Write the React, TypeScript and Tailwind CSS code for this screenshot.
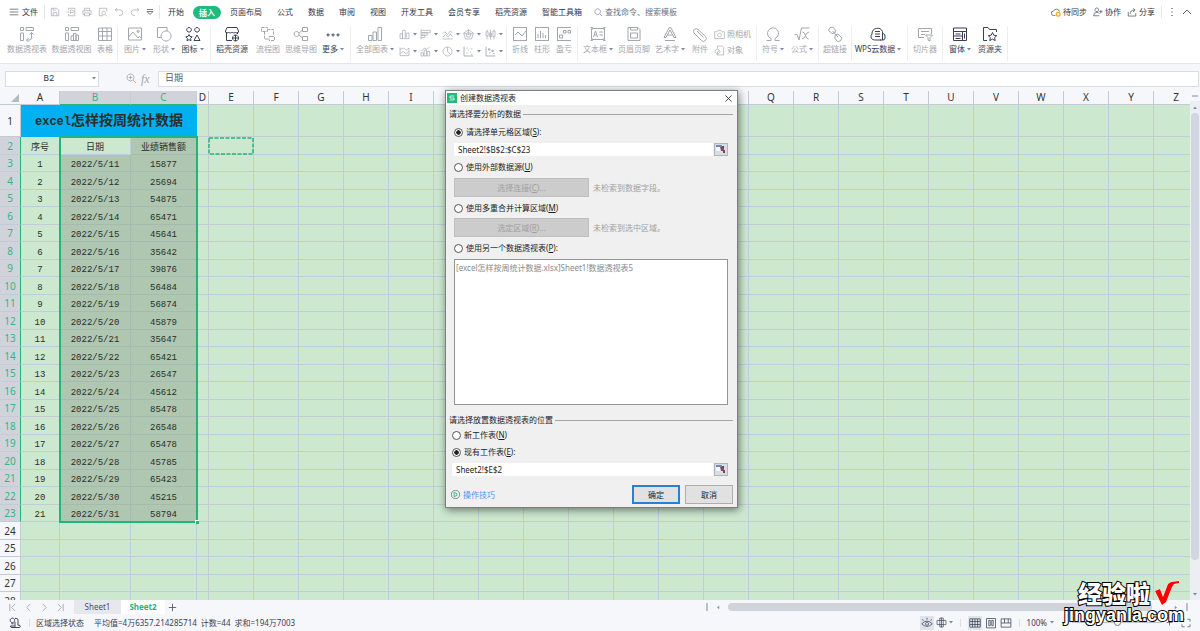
import type { ReactNode } from 'react'
import clsx from 'clsx'

/**
 * Line icons, all drawn on a 16 x 16 grid with the current text colour
 */
const icons: Record<string, ReactNode> = {
  menu: <path d="M1 3.500h14M1 8h14M1 12.500h14" />,
  save: <path d="M2 2h9l3 3v9H2zM5 14V9h6v5M5 2v3h4" />,
  export: <path d="M4 5V2h10v12H4v-3M7 11V5h3a2 2 0 0 1 0 4H7M1 8h4" />,
  print: <path d="M4 6V2h8v4M4 12H1.500V6h13v6H12M4 9.500h8V14H4z" />,
  preview: <path d="M14 7V2H2v12h6M9 6.500a3 3 0 1 0 .1 0zM11.500 12l3 3" />,
  undo: <path d="M5 1.500L2 4.500l3 3M2 4.500h7.500a4.500 4.500 0 0 1 0 9H8" />,
  redo: <path d="M11 1.500l3 3-3 3M14 4.500H6.500a4.500 4.500 0 0 0 0 9H8" />,
  more: <path d="M2 3h12M2 7h12l-6 6z" strokeWidth="1.500" />,
  search: <path d="M6.500 1.500a5 5 0 1 0 .1 0zM10.500 10.500l4 4" />,
  zoomIn: <path d="M6.500 1.500a5 5 0 1 0 .1 0zM10.500 10.500l4 4M4 6.500h5M6.500 4v5" strokeWidth="1.300" />,
  pivotTable: <path d="M1.500 1.500h3v3h-3zM7 1.500h7.500v3H7zM1.500 7h3v7.500h-3zM12.500 6.500v5.500a2 2 0 0 1-2 2H7.500M10.500 8.500l2-2 2 2M9.500 12l-2 2 2 2" />,
  pivotChart: <path d="M1.500 1.500h3v3h-3zM7 1.500h7.500v3H7zM1.500 7h3v7.500h-3zM7 14.500V10h2.500v4.500zM9.500 14.500v-7H12v7zM12 14.500V9h2.500v5.500z" />,
  table: <path d="M1.500 2h13v12.500h-13zM1.500 5.500h13M1.500 10h13M5.500 2v12.500M10 2v12.500" />,
  image: <path d="M1.500 2h13v12h-13zM1.500 11l4.500-5 5 6 1.500-1.500 2 2M11 4.500a1 1 0 1 0 .1 0z" />,
  shapes: <path d="M5.500 11.500h-4v-10H11V5M10 5a5 5 0 1 0 .1 0z" />,
  symbols: (
    <path d="M4 1.500a2.300 2.300 0 1 0 .1 0zM12 1.500a2.300 2.300 0 1 0 .1 0zM4 8.500l1 2 2.200.3-1.600 1.600.4 2.300-2-1-2 1 .4-2.300L.8 10.800 3 10.500zM12 9l3 5.500H9z" />
  ),
  store: (
    <path d="M2.500 6v8.500H8M13.500 6v2M3 1.500h10l1.500 3.500a1.500 1.500 0 0 1-3 1 2 2 0 0 1-3.500 0 2 2 0 0 1-3.500 0 1.500 1.500 0 0 1-3-1zM11.500 9a3 3 0 1 0 .1 0zM8.500 12h6M11.500 9v6" />
  ),
  flow: <path d="M1.500 1.500h6v4h-6zM7.500 3.500h6V9M4.500 5.500V13H8M11 10.500h3.500v4H9v-4z" strokeDasharray="3 1" />,
  mind: <path d="M3.500 5.500a2.500 2.500 0 1 0 .1 0zM6 7l3.500-3M6 9l3.500 3M9.500 1.500h5v4h-5zM9.500 10.500h5v4h-5z" />,
  dots: <path d="M3 8a1 1 0 1 0 .1 0zM8 8a1 1 0 1 0 .1 0zM13 8a1 1 0 1 0 .1 0z" />,
  allCharts: <path d="M1.500 9.500H5v5H1.500zM6 6h3.500v8.500H6zM11 1.500h3.500v13H11z" />,
  bars: <path d="M1.500 7H5v7H1.500zM5 2h4v12H5zM10.500 6h4v8h-4z" />,
  hbars: <path d="M1.500 1v14M1.500 2H15v3.500H1.500M1.500 5.500h9V9h-9M1.500 9H7v3.500H1.500" />,
  lines: <path d="M1 7l3-3 4 4 4-5 3 2M1 12l4-4 4 4 3-5 3 4M1 14.500h14" />,
  radar: <path d="M8 1l7 5-2.500 8.500h-9L1 6zM8 4.500l3.500 2.500-1.300 4.500H5.800L4.500 7zM8 1v7M1 6l7 2 7-2" />,
  stock: <path d="M3 1v3M3 10v5M1.500 4h3v6h-3zM8 1v14M6.500 6h3v5h-3zM13 1v2M13 11v4M11.500 3h3v8h-3z" />,
  area: <path d="M1.500 2v12h13V3l-4 3-4-3-5 2M2 11l4-3 4 3 4-3" />,
  combo: <path d="M1.500 10v4.500H5V10zM6 6v8.500h3.500V6zM10.500 8v6.500H14V8zM2 7l5-4 3 2 4-4" />,
  pie: <path d="M8 1.500a6.500 6.500 0 1 0 .1 0zM8 1.500V8l4 4" />,
  scatter: <path d="M1.500 1v13.500H15M5 10h1.500M7 6h1.500M10 9h1.500M12 4h1.500M12 12h1.500M5 3h1.500" strokeWidth="1.300" />,
  bubble: <path d="M1.500 1v13.500H15M5 4h2v2H5zM10 6h2v2h-2zM6 10h2M12 11h2" strokeWidth="1.300" />,
  sparkLine: <path d="M1 1.500h14M1 14.500h14M1.500 1.500v13M14.500 1.500v13M3 9l3-3 4 4 4-5" />,
  sparkBar: <path d="M1 1.500h14M1 14.500h14M1.500 1.500v13M14.500 1.500v13M4 12V8M6.500 12V5M9 12V7M11.500 12V9" />,
  winLoss: <path d="M1 1.500h14M1 14.500h14M1.500 1.500v13M3.500 9h3v3h-3zM7.500 4.500h2.500V7H7.500zM12 4.500h2.500V7H12z" />,
  textBox: <path d="M1.500 2.500h13v11h-13zM3.500 11l2-6 2 6M4.200 9h2.600M9.500 6H13M9.500 9H13M.5 1.500h2v2M15.500 1.500h-2v2M.5 14.500h2v-2M15.500 14.500h-2v-2" />,
  header: <path d="M2 1.500h10l2 2v11H2zM4.500 1.500V4h7V2M4.500 12V7h7v5zM2 14.500h12" />,
  wordArt: <path d="M2 11.500L7.200 1.500h1.600L14 11.500h-2L8 4 4 11.500zM5.500 9h5M3 14.500h10" />,
  clip: <path d="M2.500 3.500a2.500 2.500 0 0 1 3.500 0l7.500 7a2.700 2.700 0 0 1-4 4L2 7a3.400 3.400 0 0 1 0-3.500M5 5l6.500 6.500" />,
  camera: <path d="M1 4h3.500L6 2h4l1.500 2H15v10H1zM8 6a2.700 2.700 0 1 0 .1 0z" />,
  object: <path d="M5 5V1.500h7l2 2v11H6M5 6a3.500 3.500 0 1 0 .1 0zM5 15v-5l3-2" />,
  omega: <path d="M1.500 14.500H6v-2A5.500 5.500 0 1 1 10 12.500v2h4.500" />,
  root: <path d="M.5 8.500H3l2 5.500L7.500 2h8M8.500 6q2 0 3 3.500t3 3.500M15 6q-2 0-3.500 3.500T8 13" />,
  link: <path d="M3 1.500l3-.3 2.500 3L8 7 5 7.500 1.500 4.500zM8 9l3-1 4 4-1.500 3-3 .5L8 12.500zM5.500 5l5.500 6" />,
  cloudData: <path d="M11 14H4.500a3.500 3.500 0 0 1-2.500-6 5.500 5.500 0 0 1 10.500-2.500V14M12.500 7.500h.5a2.500 2.500 0 0 1 2 2.500v2a2 2 0 0 1-2 2h-3M5 5.500h5M5 8h5M5 10.500h5" />,
  slicer: <path d="M7 11.500H1.500v-9h13V8M4 5.500h8M4 8.500h4M8.500 9h7L13 11.500V15l-2-1v-2.500z" />,
  form: <path d="M1.500 2h13v12.500h-13zM1.500 5.500h13M1.500 10H10M10.500 5.500v9M3.500 8h5M3.500 12.500h5M12.500 7.500v5" />,
  starFolder: <path d="M5 14.500H1.500v-13H6l1.500 2h7V6M10.500 6.500l1.300 2.700 3 .4-2.200 2 .6 3-2.700-1.500-2.700 1.500.6-3-2.200-2 3-.4z" />,
  person: <path d="M6 1.500a3 3 0 1 0 .1 0zM1 14q0-5.500 5-5.500 3 0 4 2M1 14h9M12.500 5v5M10 7.500h5" />,
  share: <path d="M2 8v6.500h12V10M5 11q0-6 7-6M9.500 2l3.500 3-3.500 3" />,
  eye: <path d="M1 9q7-7 14 0-7 7-14 0zM8 7a2 2 0 1 0 .1 0zM3 5L2 3M8 3.500V1M13 5l1-2" />,
  move: <path d="M5.500 1.500h5v13h-5zM1.500 5h13v6h-13zM8 1v14" />,
  normalView: <path d="M1 2.500h14v11H1zM1 6h14M1 10h14M4.500 2.500v11M8 2.500v11M11.500 2.500v11" />,
  pageView: <path d="M2 2h12v12.500H2zM5 4.500h2v7H5zM9 4.500h2v7H9z" />,
  breakView: <path d="M1.500 2.500h13v11h-13zM6 2.500V8h5V2.500M1.500 8H6M11 8h3.500" />,
  macro: <path d="M8 6.500V14h5.500a1.500 1.500 0 0 0 0-3H12V4a2 2 0 0 0-2-2H8M2 12h5.500M2 12a2 2 0 0 0 2 2h4M4.500 1.500a3 3 0 1 0 .1 0zM3 9h3" strokeWidth="1.300" />,
  full: <path d="M10 2h4.500v4M6 14H1.500v-4M2 6V2h4M14.500 10v4H10" />,
  plus: <path d="M8 1.500v13M1.500 8h13" strokeWidth="1.500" />,
}

function Icon({ name, className = 'size-4' }: { name: string; className?: string }) {
  return (
    <svg viewBox="0 0 16 16" fill="none" stroke="currentColor" className={clsx('shrink-0', className)} aria-hidden="true">
      {icons[name]}
    </svg>
  )
}

function Caret({ className = 'text-[#7a86a0]' }: { className?: string }) {
  return (
    <svg viewBox="0 0 4 3" className={clsx('h-[3px] w-1 shrink-0', className)} aria-hidden="true">
      <path d="M0 0h4L2 2.500z" fill="currentColor" />
    </svg>
  )
}

interface ToolProps {
  icon: string
  label: string
  width: string
  /** Available for the current selection */
  active?: boolean
  menu?: boolean
}

function Tool({ icon, label, width, active, menu }: ToolProps) {
  return (
    <button className={clsx('flex shrink-0 flex-col items-center gap-px', width, active ? 'text-[#3a4156]' : 'text-[#a3a6ad]')}>
      <Icon name={icon} />
      <span className="flex items-center gap-0.5 whitespace-nowrap leading-3">
        {label}
        {menu && <Caret />}
      </span>
    </button>
  )
}

function Group({ children, className }: { children: ReactNode; className?: string }) {
  return <div className={clsx('flex shrink-0 border-r border-[#eceef1]', className)}>{children}</div>
}

const quickTools = ['save', 'export', 'print', 'preview', 'undo', 'redo']
const menuTabs = ['开始', '插入', '页面布局', '公式', '数据', '审阅', '视图', '开发工具', '会员专享', '稻壳资源', '智能工具箱']

function MenuBar() {
  return (
    <header className="flex h-6 items-center pr-2 pl-[9px] text-[#303648]">
      <button className="flex items-center gap-[3px]">
        <Icon name="menu" className="size-[10px]" />
        文件
      </button>
      <div className="ml-[6px] flex items-center gap-[6px] border-x border-[#e4e6ea] px-[5px] py-0.5 text-[#9a9da6]">
        {quickTools.map((name) => (
          <button key={name} aria-label={name}>
            <Icon name={name} className="size-[10px]" />
          </button>
        ))}
        <button aria-label="more" className="text-[#4a5164]">
          <Icon name="more" className="size-2" />
        </button>
      </div>
      <nav className="ml-2 flex items-center gap-[15px] whitespace-nowrap">
        {menuTabs.map((tab) => (
          <button
            key={tab}
            className={clsx(tab === '插入' && '-mx-[6px] rounded-full bg-[#1fbb7d] px-[6px] leading-[13px] font-bold text-white')}
          >
            {tab}
          </button>
        ))}
      </nav>
      <label className="ml-3 flex items-center gap-0.5 text-[#66718c]">
        <Icon name="search" className="size-[9px]" />
        <input className="w-24 bg-transparent outline-none placeholder:text-[#66718c]" placeholder="查找命令、搜索模板" />
      </label>
      <div className="ml-auto flex items-center gap-[6px] whitespace-nowrap">
        <button className="flex items-center gap-0.5">
          <svg viewBox="0 0 16 16" fill="none" className="size-[10px]" aria-hidden="true">
            <path d="M7 13.500H4A3.500 3.500 0 0 1 4 6.500a5 5 0 0 1 9.500 1" stroke="currentColor" />
            <circle cx="11.500" cy="11.500" r="3" stroke="#f5a623" strokeWidth="2" />
          </svg>
          待同步
        </button>
        <button className="flex items-center gap-0.5">
          <Icon name="person" className="size-[10px]" />
          协作
        </button>
        <button className="flex items-center gap-0.5">
          <Icon name="share" className="size-[10px]" />
          分享
        </button>
        <span className="h-3 border-r border-[#e4e6ea]" />
        <button aria-label="options" className="w-2">
          <svg viewBox="0 0 8 10" className="w-2" fill="currentColor" aria-hidden="true">
            <path d="M3.500 1h1v1h-1zM3.500 4.500h1v1h-1zM3.500 8h1v1h-1z" />
          </svg>
        </button>
        <button aria-label="collapse">
          <svg viewBox="0 0 10 6" className="w-[10px]" fill="none" stroke="currentColor" aria-hidden="true">
            <path d="M1 5l4-4 4 4" strokeWidth=".8" />
          </svg>
        </button>
      </div>
    </header>
  )
}

const chartKinds = ['bars', 'hbars', 'lines', 'radar', 'stock', 'area', 'combo', 'pie', 'scatter', 'bubble']

function Ribbon() {
  return (
    <div className="flex h-10 border-b border-[#e2e5e9] pt-0.5 pb-0.5 pl-1 shadow-xs">
      <Group>
        <Tool icon="pivotTable" label="数据透视表" width="w-[46px]" />
        <Tool icon="pivotChart" label="数据透视图" width="w-[43px]" />
        <Tool icon="table" label="表格" width="w-6" />
      </Group>
      <Group className="pr-[3px] pl-0.5">
        <Tool icon="image" label="图片" width="w-[30px]" menu />
        <Tool icon="shapes" label="形状" width="w-[28px]" menu />
        <Tool icon="symbols" label="图标" width="w-[29px]" active menu />
      </Group>
      <Group className="pr-[3px]">
        <Tool icon="store" label="稻壳资源" width="w-[42px]" active />
        <Tool icon="flow" label="流程图" width="w-[30px]" />
        <Tool icon="mind" label="思维导图" width="w-9" />
        <Tool icon="dots" label="更多" width="w-7" active menu />
      </Group>
      <Group>
        <Tool icon="allCharts" label="全部图表" width="w-12" menu />
        <div className="grid w-[107px] grid-cols-5 text-[#a3a6ad]">
          {chartKinds.map((name) => (
            <button key={name} aria-label={name} className="flex h-4 items-center gap-[3px]">
              <Icon name={name} className="size-[11px]" />
              <Caret />
            </button>
          ))}
        </div>
      </Group>
      <Group className="px-0.5">
        <Tool icon="sparkLine" label="折线" width="w-[22px]" />
        <Tool icon="sparkBar" label="柱形" width="w-[22px]" />
        <Tool icon="winLoss" label="盈亏" width="w-[22px]" />
      </Group>
      <Group>
        <Tool icon="textBox" label="文本框" width="w-10" menu />
        <Tool icon="header" label="页眉页脚" width="w-8" />
        <Tool icon="wordArt" label="艺术字" width="w-10" menu />
        <Tool icon="clip" label="附件" width="w-5" />
        <div className="flex w-[46px] flex-col pl-1 whitespace-nowrap text-[#a3a6ad]">
          <button className="flex h-4 items-center gap-0.5">
            <Icon name="camera" className="size-[11px]" />
            照相机
          </button>
          <button className="flex h-4 items-center gap-0.5">
            <Icon name="object" className="size-[11px]" />
            对象
          </button>
        </div>
      </Group>
      <Group className="pr-[3px]">
        <Tool icon="omega" label="符号" width="w-8" menu />
        <Tool icon="root" label="公式" width="w-[26px]" menu />
      </Group>
      <Group>
        <Tool icon="link" label="超链接" width="w-8" />
      </Group>
      <Group className="pr-[3px]">
        <Tool icon="cloudData" label="WPS云数据" width="w-[52px]" active menu />
      </Group>
      <Group>
        <Tool icon="slicer" label="切片器" width="w-[34px]" />
      </Group>
      <Group className="px-0.5">
        <Tool icon="form" label="窗体" width="w-[30px]" active menu />
        <Tool icon="starFolder" label="资源夹" width="w-[30px]" active />
      </Group>
    </div>
  )
}

function FormulaBar() {
  return (
    <div className="flex h-[27px] items-center bg-[#f5f7fa] pt-0.5 pl-[5px]">
      <div className="flex h-4 w-[94px] items-center border border-[#d9dce2] bg-white pr-0.5">
        <input
          aria-label="Name box"
          defaultValue="B2"
          className="w-full min-w-0 bg-transparent text-center font-['Liberation_Mono',monospace] text-[9px] text-[#303648] outline-none"
        />
        <Caret />
      </div>
      <div className="ml-[27px] flex w-8 items-center gap-1 text-[#a3a6ad]">
        <Icon name="zoomIn" className="size-[11px]" />
        <span className="font-['Liberation_Serif',serif] text-[12px] italic">fx</span>
      </div>
      <input
        aria-label="Formula"
        defaultValue="日期"
        className="mr-px h-4 flex-1 border border-[#d9dce2] bg-white px-[6px] pb-0.5 text-[9px] text-[#555b6b] outline-none"
      />
    </div>
  )
}

const columns = 'ABCDEFGHIJKLMNOPQRSTUVWXYZ'.split('')
const columnWidths: Record<string, string> = {
  A: 'w-[39px]',
  B: 'w-[71px]',
  C: 'w-[66px]',
  D: 'w-3',
}
const sales = [
  15877, 25694, 54875, 65471, 45641, 35642, 39876, 56484, 56874, 45879, 35647,
  65421, 26547, 45612, 85478, 26548, 65478, 45785, 65423, 45215, 58794,
]

/** Text of a cell: row 2 holds the headings, rows 3 to 23 the data */
function cellText(column: string, row: number) {
  if (row === 2) return { A: '序号', B: '日期', C: '业绩销售额' }[column]
  if (row < 3 || row > 23) return ''
  return { A: `${row - 2}`, B: `2022/5/${row + 8}`, C: `${sales[row - 3]}` }[column]
}

function Sheet() {
  const rows = Array.from({ length: 27 }, (_, i) => i + 2)
  const line = 'border-r border-b border-[#c3cbd9]'

  return (
    <table className="w-[1199px] table-fixed border-separate border-spacing-0 text-center text-[#2a2f2a]">
      <colgroup>
        <col className="w-[21px]" />
        {columns.map((column) => (
          <col key={column} className={columnWidths[column] ?? 'w-[45px]'} />
        ))}
      </colgroup>
      <thead className="text-[10px] leading-[13px] text-[#333]">
        <tr className="h-[14px] bg-[#f5f7fa]">
          <th className="border-b border-[#c3cbd9] p-0 pr-0.5">
            <svg viewBox="0 0 8 8" className="ml-auto size-2" aria-hidden="true">
              <path d="M8 0v8H0z" fill="#b5b9c0" />
            </svg>
          </th>
          {columns.map((column) => (
            <th
              key={column}
              className={clsx(
                'p-0 font-normal',
                column === 'B' || column === 'C'
                  ? 'border-r border-b border-r-[#c9ccd5] border-b-[#22b57b] bg-[#d0d3da] text-[#35b586]'
                  : line,
              )}
            >
              {column}
            </th>
          ))}
        </tr>
      </thead>
      <tbody className="font-['Liberation_Mono','Noto_Sans_CJK_SC',monospace] text-[9px] leading-[14px]">
        <tr className="h-8">
          <th className="border-r border-b border-[#c3cbd9] bg-[#f5f7fa] p-0 font-['Noto_Sans',sans-serif] text-[10px] font-normal text-[#333]">1</th>
          <td colSpan={3} className="bg-[#00b0f0] p-0 text-[14px] font-bold">
            <span className="text-[12px]">excel</span>怎样按周统计数据
          </td>
          {columns.slice(3).map((column) => (
            <td key={column} className={clsx('bg-[#cce8cf] p-0', line)} />
          ))}
        </tr>
        {rows.map((row) => (
          <tr key={row} className={row % 2 ? 'h-[17px]' : 'h-[18px]'}>
            <th
              className={clsx(
                "border-r border-b border-b-[#c3cbd9] p-0 font-['Noto_Sans',sans-serif] text-[10px] font-normal",
                row < 24 ? 'border-r-[#22b57b] bg-[#d0d3da] text-[#35b586]' : 'border-r-[#c3cbd9] bg-[#f5f7fa] text-[#333]',
              )}
            >
              {row}
            </th>
            {columns.map((column) => (
              <td
                key={column}
                className={clsx(
                  'p-0 pt-1 leading-3 whitespace-nowrap',
                  row < 24 && row + column !== '2B' && (column === 'B' || column === 'C')
                    ? 'border-r border-b border-[#a7b9b0] bg-[#afc6b1]'
                    : `bg-[#cce8cf] ${line}`,
                )}
              >
                {cellText(column, row)}
              </td>
            ))}
          </tr>
        ))}
      </tbody>
    </table>
  )
}

function VerticalScroll() {
  return (
    <div className="flex w-[10px] shrink-0 flex-col items-center bg-[#eceef3] text-[#8690a8]">
      <div className="flex h-[10px] w-full items-center justify-center bg-[#f5f7fa]">
        <span className="h-0.5 w-[6px] bg-[#b9c0cf]" />
      </div>
      <div className="flex h-3 items-center">
        <Caret className="rotate-180" />
      </div>
      <div className="w-2 flex-1 rounded-full bg-[#d2d6e0]" />
      <div className="flex h-10 items-end pb-1">
        <Caret />
      </div>
    </div>
  )
}

interface RadioProps {
  group: string
  label: string
  hotkey: string
  suffix?: string
  checked?: boolean
}

function Radio({ group, label, hotkey, suffix = '', checked }: RadioProps) {
  return (
    <label className="flex h-3 items-center gap-[3px]">
      <input
        type="radio"
        name={group}
        defaultChecked={checked}
        className="size-[9px] appearance-none rounded-full border border-[#555] bg-white checked:bg-[radial-gradient(circle,#222_40%,#fff_50%)]"
      />
      <span>
        {label}(<u>{hotkey}</u>){suffix}
      </span>
    </label>
  )
}

function Legend({ children }: { children: ReactNode }) {
  return (
    <div className="flex items-center gap-0.5 leading-3">
      {children}
      <span className="flex-1 border-t border-[#a5a5a5]" />
    </div>
  )
}

function RangeInput({ label, value }: { label: string; value: string }) {
  return (
    <div className="flex h-[13px] gap-px">
      <input aria-label={label} defaultValue={value} className="min-w-0 flex-1 bg-white px-1 outline-none" />
      <button aria-label="Pick range" className="flex w-[14px] items-center justify-center border border-[#b0b4bb] bg-[#d9dde5]">
        <svg viewBox="0 0 10 9" className="w-[10px]" aria-hidden="true">
          <path d="M0 0h7v6H0z" fill="#f4f7ff" />
          <path d="M0 0h6v2H0z" fill="#6f86c4" />
          <path d="M4 2h3v1h1v2h1v3H7V6H5z" fill="#8c4a50" />
          <path d="M6 1h2v2H6zM8 6h1v2H8z" fill="#3d4f8f" />
        </svg>
      </button>
    </div>
  )
}

function DisabledAction({ label, hotkey, note }: { label: string; hotkey: string; note: string }) {
  return (
    <div className="flex items-center gap-1 text-[#a0a0a0]">
      <button disabled className="h-[19px] w-[135px] border border-[#c0c0c0] bg-[#cccccc]">
        {label}(<u>{hotkey}</u>)...
      </button>
      {note}
    </div>
  )
}

/**
 * Create pivot table dialog
 */
function PivotDialog() {
  return (
    <div
      role="dialog"
      aria-label="创建数据透视表"
      className="absolute top-[90px] left-[445px] w-[293px] border border-[#7b7f80] bg-[#f0f0f0] text-[#1d1d1d] shadow-[1px_2px_8px_rgba(0,0,0,0.5)]"
    >
      <div className="flex h-[14px] items-center gap-[3px] bg-white pr-[5px] pl-px">
        <svg viewBox="0 0 20 20" className="size-[10px]" aria-hidden="true">
          <rect width="20" height="20" fill="#1fbb7d" />
          <path d="M15 6H6v4h8v4H5" fill="none" stroke="#fff" strokeWidth="1.500" />
        </svg>
        创建数据透视表
        <button aria-label="Close" className="ml-auto">
          <svg viewBox="0 0 8 8" className="size-[7px]" stroke="#333" fill="none" aria-hidden="true">
            <path d="M.5.5l7 7M7.500.5l-7 7" />
          </svg>
        </button>
      </div>

      <div className="pt-[3px] pr-1 pl-[3px]">
        <Legend>请选择要分析的数据</Legend>
        <div className="flex flex-col pt-[6px] pr-[5px] pl-[5px]">
          <Radio group="source" label="请选择单元格区域" hotkey="S" suffix=":" checked />
          <div className="py-[5px]">
            <RangeInput label="数据区域" value="Sheet2!$B$2:$C$23" />
          </div>
          <Radio group="source" label="使用外部数据源" hotkey="U" />
          <div className="py-[5px]">
            <DisabledAction label="选择连接" hotkey="C" note="未检索到数据字段。" />
          </div>
          <Radio group="source" label="使用多重合并计算区域" hotkey="M" />
          <div className="pt-1 pb-[5px]">
            <DisabledAction label="选定区域" hotkey="R" note="未检索到选中区域。" />
          </div>
          <Radio group="source" label="使用另一个数据透视表" hotkey="P" suffix=":" />
          <select
            size={8}
            aria-label="数据透视表"
            className="mt-[5px] h-[146px] appearance-none overflow-hidden border border-[#8f959c] bg-white px-px py-0.5 text-[#8a8a8a] outline-none"
          >
            <option>[excel怎样按周统计数据.xlsx]Sheet1!数据透视表5</option>
          </select>
        </div>
      </div>

      <div className="pt-[9px] pr-1 pl-[3px]">
        <Legend>请选择放置数据透视表的位置</Legend>
        <div className="flex flex-col gap-[5px] pt-[3px] pr-[5px] pl-[3px]">
          <Radio group="target" label="新工作表" hotkey="N" />
          <Radio group="target" label="现有工作表" hotkey="E" suffix=":" checked />
          <RangeInput label="放置位置" value="Sheet2!$E$2" />
        </div>
      </div>

      <div className="flex items-center gap-[5px] pt-[9px] pr-1 pb-[3px] pl-[5px]">
        <a href="#tips" className="mr-auto flex items-center gap-[3px] text-[#4a90f0]">
          <svg viewBox="0 0 10 10" className="size-[9px]" fill="none" aria-hidden="true">
            <circle cx="5" cy="5" r="4.500" stroke="#5f6b66" strokeWidth=".8" />
            <path d="M3.500 2.500v5l3-1.500v-2z" stroke="#1fbb7d" />
          </svg>
          操作技巧
        </a>
        <button className="h-[19px] w-12 border-2 border-[#2b7fd0] bg-[#e1e1e1]">确定</button>
        <button className="h-[19px] w-12 border border-[#adadad] bg-[#e1e1e1]">取消</button>
      </div>
    </div>
  )
}

function TabBar() {
  return (
    <div className="flex h-[14px] items-center bg-[#f5f7fa] text-[#4a5164]">
      <div className="flex w-[74px] items-center gap-[7px] pl-2 text-[#a3a9b8]">
        {['M2 1v8M8 1L4 5l4 4', 'M7 1L3 5l4 4', 'M3 1l4 4-4 4', 'M2 1l4 4-4 4M8 1v8'].map((d) => (
          <button key={d} aria-label="Move between sheets">
            <svg viewBox="0 0 10 10" className="size-[9px]" fill="none" stroke="currentColor" aria-hidden="true">
              <path d={d} />
            </svg>
          </button>
        ))}
      </div>
      <button className="h-full w-[47px] bg-[#e6e8ee]">Sheet1</button>
      <button className="h-full w-11 bg-white font-bold text-[#1fb57a]">Sheet2</button>
      <button aria-label="Add sheet" className="ml-[3px]">
        <Icon name="plus" className="size-[9px]" />
      </button>
      <div className="ml-auto flex w-[494px] items-center gap-2 pr-3">
        <span className="h-2 w-0.5 bg-[#b9c0cf]" />
        <Caret className="rotate-90 text-[#8690a8]" />
        <div className="h-2 w-[424px] rounded-full bg-[#d0d3da]" />
        <Caret className="ml-auto -rotate-90 text-[#8690a8]" />
        <span className="h-2 w-0.5 bg-[#b9c0cf]" />
      </div>
    </div>
  )
}

function StatusBar() {
  return (
    <footer className="flex h-[17px] items-center bg-[#f5f7fa] pr-[9px] pl-[9px] whitespace-nowrap text-[#3a4156]">
      <Icon name="macro" className="size-3" />
      <span className="ml-2 h-2 border-r border-[#dcdfe5]" />
      <span className="ml-[6px]">区域选择状态</span>
      <span className="ml-[10px]">平均值=4万6357.214285714</span>
      <span className="ml-1">计数=44</span>
      <span className="ml-1">求和=194万7003</span>
      <div className="ml-auto flex items-center">
        <button aria-label="Eye protection" className="flex size-[14px] items-center justify-center bg-[#dfe3ea]">
          <Icon name="eye" className="size-3" />
        </button>
        <button aria-label="Reading mode" className="ml-0.5 flex items-center gap-0.5">
          <Icon name="move" className="size-[11px]" />
          <Caret />
        </button>
        <span className="mx-[7px] h-2 border-r border-[#dcdfe5]" />
        <button aria-label="Normal view" className="flex size-[14px] items-center justify-center bg-[#dfe3ea]">
          <Icon name="normalView" className="size-3" />
        </button>
        <button aria-label="Page view" className="ml-[3px]">
          <Icon name="pageView" className="size-3" />
        </button>
        <button aria-label="Page breaks" className="ml-[3px]">
          <Icon name="breakView" className="size-3" />
        </button>
        <span className="mx-[7px] h-2 border-r border-[#dcdfe5]" />
        <button className="flex items-center gap-[3px]">
          100%
          <Caret />
        </button>
        <span className="ml-2 h-px w-[6px] bg-[#4a5164]" />
        <input
          type="range"
          aria-label="Zoom"
          className="mx-1 h-px w-[90px] appearance-none bg-[#b9c0cf] [&::-webkit-slider-thumb]:size-[7px] [&::-webkit-slider-thumb]:appearance-none [&::-webkit-slider-thumb]:rounded-full [&::-webkit-slider-thumb]:border [&::-webkit-slider-thumb]:border-[#777] [&::-webkit-slider-thumb]:bg-white"
        />
        <Icon name="plus" className="size-[7px]" />
        <button aria-label="Full screen" className="ml-2">
          <Icon name="full" className="size-[10px]" />
        </button>
      </div>
    </footer>
  )
}

function Watermark() {
  return (
    <div className="pointer-events-none absolute right-4 bottom-[7px] text-white [paint-order:stroke_fill] [-webkit-text-stroke:2px_#000]">
      <div className="flex items-center justify-end gap-1 pr-1 font-['Noto_Sans_CJK_SC',sans-serif] text-[24px] leading-[26px] font-black">
        经验啦
        <svg viewBox="0 0 26 26" className="size-[26px]" aria-hidden="true">
          <path d="M1 11l5-2 3 8 5-13 3-2 8-1v2l-5 1-2 3-6 15-4 3z" fill="#f00" stroke="#fff" />
        </svg>
      </div>
      <div className="font-['Liberation_Sans',sans-serif] text-[18px] leading-[18px] font-bold">jingyanla.com</div>
    </div>
  )
}

export default function App() {
  return (
    <div className="relative flex h-screen flex-col overflow-hidden bg-white font-['Noto_Sans','Noto_Sans_CJK_SC',sans-serif] text-[8px] leading-3">
      <MenuBar />
      <Ribbon />
      <FormulaBar />
      <main className="flex min-h-0 flex-1">
        <div className="relative min-w-0 flex-1 overflow-hidden bg-[#cce8cf]">
          <Sheet />
          {/* Selected range with its fill handle */}
          <div className="absolute top-[45px] left-[59px] h-[387px] w-[139px] border-2 border-[#22b57b]">
            <span className="absolute -right-[3px] -bottom-[3px] size-1 border-t border-l border-white bg-[#22b57b]" />
          </div>
          {/* Marching ants round the target cell */}
          <svg className="absolute top-[46px] left-[208px] h-[18px] w-[46px]" viewBox="0 0 46 18" aria-hidden="true">
            <path d="M1 1h44v16H1z" fill="none" stroke="#22b57b" strokeWidth="1.500" strokeDasharray="4 1.500" />
          </svg>
        </div>
        <VerticalScroll />
      </main>
      <TabBar />
      <StatusBar />
      <PivotDialog />
      <Watermark />
    </div>
  )
}
